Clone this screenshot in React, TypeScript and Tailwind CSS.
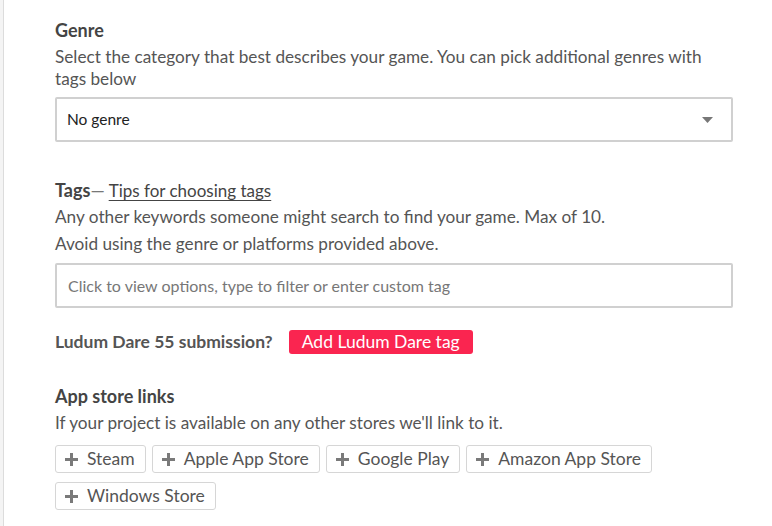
import React from "react";

const stores = ["Steam", "Apple App Store", "Google Play", "Amazon App Store", "Windows Store"];

function PlusIcon() {
  return (
    <svg width="13" height="13" viewBox="0 0 13 13" className="shrink-0">
      <rect x="5" y="0" width="3" height="13" fill="#7a7a7a" />
      <rect x="0" y="5" width="13" height="3" fill="#7a7a7a" />
    </svg>
  );
}

export default function App() {
  return (
    <div
      className="flex min-h-[526px] w-[772px] bg-white text-[#555]"
      style={{ fontFamily: "Lato, 'Open Sans', sans-serif" }}
    >
      <div className="w-[4px] shrink-0 border-r border-[#dcdcdc] bg-[#f4f4f4]" />
      <div className="flex w-[729px] flex-col pl-[51px] pt-[18px]">
        <h2 className="text-[18px] font-bold leading-[24px] text-[#444]">Genre</h2>
        <p className="mt-[4px] max-w-[665px] text-[17.2px] leading-[22px]">
          Select the category that best describes your game. You can pick additional genres with tags below
        </p>
        <div className="mt-[7px] flex h-[45px] items-center justify-between rounded-[2px] border-2 border-[#d0d0d0] pl-[10px] pr-[18px]">
          <span className="text-[15.5px] text-[#222]">No genre</span>
          <svg width="11" height="6" viewBox="0 0 11 6">
            <path d="M0 0h11L5.5 6z" fill="#777" />
          </svg>
        </div>

        <div className="mt-[36px] flex items-baseline text-[18px] leading-[24px] text-[#444]">
          <span className="font-bold">Tags</span>
          <span className="text-[#777]">—</span>
          <a className="ml-[4px] text-[17px] underline underline-offset-[3px]">Tips for choosing tags</a>
        </div>
        <p className="mt-[3px] text-[17.2px] leading-[22px]">
          Any other keywords someone might search to find your game. Max of 10.
        </p>
        <p className="mt-[5px] text-[17.2px] leading-[22px]">
          Avoid using the genre or platforms provided above.
        </p>
        <div className="mt-[8px] flex h-[45px] items-center rounded-[2px] border-2 border-[#d0d0d0] pl-[11px]">
          <span className="text-[16px] text-[#777]">Click to view options, type to filter or enter custom tag</span>
        </div>

        <div className="mt-[22px] flex items-center">
          <span className="text-[17.5px] font-bold leading-[24px]">Ludum Dare 55 submission?</span>
          <button className="ml-[16px] h-[24px] rounded-[3px] bg-[#fa2550] px-[13px] text-[17.5px] leading-[24px] text-white">
            Add Ludum Dare tag
          </button>
        </div>

        <h2 className="mt-[30px] text-[18px] font-bold leading-[24px] text-[#444]">App store links</h2>
        <p className="mt-[4px] text-[17.2px] leading-[22px]">
          If your project is available on any other stores we'll link to it.
        </p>
        <div className="mt-[11px] flex flex-wrap gap-x-[6px] gap-y-[9px]">
          {stores.map((s) => (
            <button
              key={s}
              className="flex h-[28px] items-center gap-[9px] rounded-[3px] border border-[#d6d6d6] pl-[9px] pr-[10px] text-[17.5px] text-[#555]"
            >
              <PlusIcon />
              {s}
            </button>
          ))}
        </div>
      </div>
    </div>
  );
}
